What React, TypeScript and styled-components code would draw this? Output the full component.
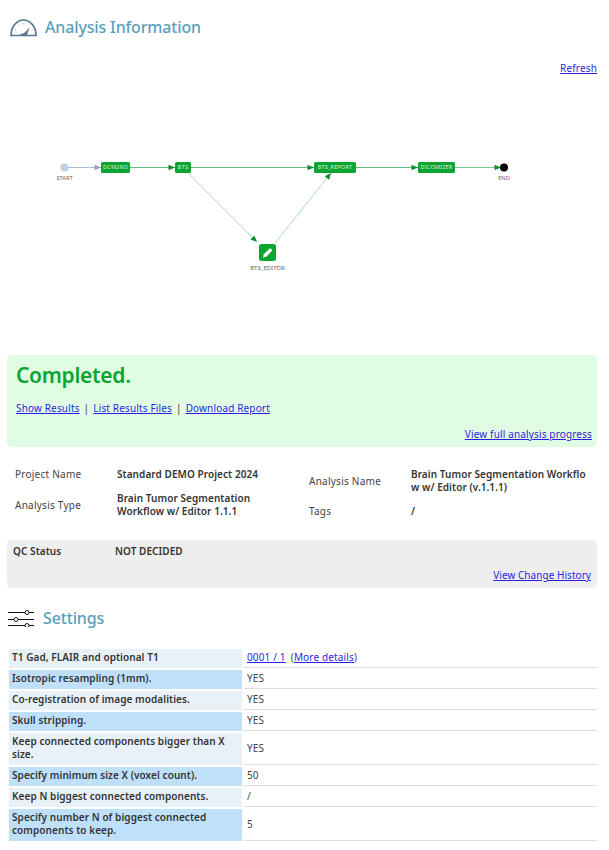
import React from 'react';
import styled, { createGlobalStyle } from 'styled-components';

const GlobalStyle = createGlobalStyle`
html, body {
  margin: 0;
  padding: 0;
  background: #fff;
  font-family: "Noto Sans", "Liberation Sans", sans-serif;
  font-size: 10px;
  letter-spacing: 0.15px;
  color: #333;
}
a {
  color: #2a1fe0;
  text-decoration: underline;
}
`;

const Page = styled.div`
  width: 609px;
  height: 850px;
  overflow: hidden;
  box-sizing: border-box;
  padding: 0 12px 0 7px;
`;

const SectionHeader = styled.div<{ $top: number; $left: number; $gap: number }>`
  display: flex;
  align-items: center;
  gap: ${p => p.$gap}px;
  padding: ${p => p.$top}px 0 0 ${p => p.$left}px;
  height: 20px;
`;

const SectionTitle = styled.h2`
  margin: 0;
  font-size: 16px;
  line-height: 20px;
  font-weight: 500;
  letter-spacing: -0.15px;
  color: #5b9fb8;
`;

const RefreshRow = styled.div`
  display: flex;
  justify-content: flex-end;
  margin-top: 24px;
  height: 14px;
  line-height: 14px;
`;

const Diagram = styled.svg`
  display: block;
  width: 590px;
  height: 281px;
  margin-top: -1px;
  letter-spacing: 0;
`;

const CompletedCard = styled.div`
  background: #e0fde4;
  border-radius: 5px;
  height: 92px;
  box-sizing: border-box;
  padding: 6px 5px 0 9px;
  display: flex;
  flex-direction: column;
`;

const CompletedTitle = styled.div`
  font-size: 21px;
  line-height: 28px;
  font-weight: 600;
  color: #0aa531;
  letter-spacing: -0.3px;
`;

const ResultLinks = styled.div`
  display: flex;
  gap: 4px;
  margin-top: 12px;
  line-height: 14px;
`;

const ProgressLink = styled.a`
  align-self: flex-end;
  margin-top: 12px;
  line-height: 14px;
`;

const InfoGrid = styled.div`
  display: grid;
  grid-template-columns: 294px 1fr;
  padding: 20px 0 0 8px;
  height: 55px;
`;

const InfoColumn = styled.div<{ $top: number; $gap: number }>`
  display: flex;
  flex-direction: column;
  gap: ${p => p.$gap}px;
  padding-top: ${p => p.$top}px;
`;

const InfoRow = styled.div<{ $height: number }>`
  display: grid;
  grid-template-columns: 102px 1fr;
  align-items: center;
  min-height: ${p => p.$height}px;
`;

const InfoLabel = styled.span`
  color: #444;
  letter-spacing: 0.25px;
`;

const InfoValue = styled.span<{ $breakWords?: boolean }>`
  font-weight: 600;
  line-height: 13px;
  letter-spacing: 0.07px;
  color: #333;
  width: ${p => (p.$breakWords ? 176 : 150)}px;
  word-break: ${p => (p.$breakWords ? 'break-all' : 'normal')};
`;

const QcCard = styled.div`
  background: #eeeeee;
  border-radius: 5px;
  margin-top: 18px;
  height: 48px;
  box-sizing: border-box;
  padding: 4px 6px 0 6px;
  display: flex;
  flex-direction: column;
`;

const QcRow = styled.div`
  display: grid;
  grid-template-columns: 102px 1fr;
  font-weight: 600;
  letter-spacing: 0.07px;
  line-height: 14px;
`;

const HistoryLink = styled.a`
  align-self: flex-end;
  margin-top: 10px;
  line-height: 14px;
  letter-spacing: 0.05px;
`;

const SettingsTable = styled.table`
  width: 592px;
  margin: 19px 0 0 0;
  border-collapse: separate;
  border-spacing: 2px;
  table-layout: fixed;
`;

const NameCell = styled.td<{ $striped: boolean }>`
  width: 233px;
  box-sizing: border-box;
  padding: 2px 3px 4px;
  font-weight: 600;
  letter-spacing: 0.07px;
  line-height: 13px;
  color: #333;
  background: ${p => (p.$striped ? '#bfe0fb' : '#e8f1f8')};
`;

const ValueCell = styled.td`
  padding: 2px 3px 3px;
  line-height: 13px;
  border-bottom: 1px solid #dfdfd8;
  color: #444;
`;

const DetailParen = styled.span`
  margin-left: 5px;
`;

const rows: { name: string; value: React.ReactNode }[] = [
  {
    name: 'T1 Gad, FLAIR and optional T1',
    value: (
      <>
        <a href="#">0001 / 1</a>
        <DetailParen>
          (<a href="#">More details</a>)
        </DetailParen>
      </>
    ),
  },
  { name: 'Isotropic resampling (1mm).', value: 'YES' },
  { name: 'Co-registration of image modalities.', value: 'YES' },
  { name: 'Skull stripping.', value: 'YES' },
  { name: 'Keep connected components bigger than X size.', value: 'YES' },
  { name: 'Specify minimum size X (voxel count).', value: '50' },
  { name: 'Keep N biggest connected components.', value: '/' },
  { name: 'Specify number N of biggest connected components to keep.', value: '5' },
];

const GaugeIcon = () => (
  <svg width="27" height="19" viewBox="0 0 27 19" fill="none" stroke="#54788a">
    <path d="M1 17.500 C1 9 6.500 2 13.500 2 S26 9 26 17.500 Z" strokeWidth="1.700" />
    <path d="M5 12l1.500.8M13.500 5v1.500M8 7l1 1M20 6.500l-1 1M23 12l-1.400.6" strokeWidth="0.7" stroke="#9db3bf" />
    <path d="M10 16.500c2-.5 4-1 5.500-2.600l4-4-2.200 5.400c-.3 1-.4 1.500-.4 2H10z" fill="#54788a" strokeWidth="0.4" />
  </svg>
);

const SlidersIcon = () => (
  <svg width="26" height="17" viewBox="0 0 26 17" fill="none" stroke="#111" strokeWidth="1">
    <path d="M0 2.500h17M21 2.500h5M0 9.500h6M10 9.500h16M0 15.500h17M21 15.500h5" />
    <circle cx="19" cy="2.500" r="2" />
    <circle cx="8" cy="9.500" r="2" />
    <circle cx="19" cy="15.500" r="2" />
  </svg>
);

const nodes = [
  { id: 'DCM2NII', x: 94, w: 29 },
  { id: 'BTS', x: 168, w: 16 },
  { id: 'BTS_REPORT', x: 307, w: 42 },
  { id: 'DICOMIZER', x: 411, w: 37 },
];

// y of the main line inside the diagram
const LINE = 93.5;

const Arrow = ({ x, y, angle, color }: { x: number; y: number; angle: number; color: string }) => (
  <path d="M-6.500 -2.800 L0 0 L-6.500 2.800 Z" fill={color} transform={`translate(${x} ${y}) rotate(${angle})`} />
);

const Workflow = () => (
  <Diagram viewBox="0 0 590 281">
    <g fill="none" strokeWidth="1">
      <path d={`M61 ${LINE}H94`} stroke="#a9bfd6" />
      <path d={`M123 ${LINE}H168M184 ${LINE}H307M349 ${LINE}H411`} stroke="#67b980" />
      <path d={`M448 ${LINE}H494`} stroke="#7fcb94" />
      <path d="M181 99L250 168M268 169L324 99" stroke="#a6dcb3" />
    </g>
    <Arrow x={94} y={LINE} angle={0} color="#8ba6c0" />
    <Arrow x={168} y={LINE} angle={0} color="#0a8f2e" />
    <Arrow x={307} y={LINE} angle={0} color="#0a8f2e" />
    <Arrow x={411} y={LINE} angle={0} color="#0a8f2e" />
    <Arrow x={494} y={LINE} angle={0} color="#0a8f2e" />
    <Arrow x={250} y={168} angle={45} color="#0a8f2e" />
    <Arrow x={324} y={99} angle={-51} color="#0a8f2e" />

    <circle cx="57.500" cy={LINE} r="4" fill="#bcd0e5" />
    <text x="57.500" y="106" fontSize="5.700" fill="#666" textAnchor="middle">START</text>
    <circle cx="497" cy={LINE} r="4" fill="#000" />
    <text x="497" y="106" fontSize="5.700" fill="#666" textAnchor="middle">END</text>

    {nodes.map(n => (
      <g key={n.id}>
        <rect x={n.x} y={LINE - 5.500} width={n.w} height="11" rx="1.500" fill="#0aa531" />
        <text x={n.x + n.w / 2} y={LINE + 1.500} fontSize="5.500" fill="#d7f3dd" textAnchor="middle" letterSpacing="0.2">{n.id}</text>
      </g>
    ))}

    <rect x="252" y="170" width="17" height="17" rx="2.500" fill="#0aa531" />
    <path d="M256 183.500l.8-3.200 5.600-5.600a1 1 0 0 1 1.400 0l1 1a1 1 0 0 1 0 1.400l-5.600 5.600z" fill="#fff" />
    <text x="260.500" y="196" fontSize="6" fill="#666" textAnchor="middle">BTS_EDITOR</text>
  </Diagram>
);

export default function App() {
  return (
    <>
      <GlobalStyle />
      <Page>
        <SectionHeader $top={17} $left={3} $gap={8}>
          <GaugeIcon />
          <SectionTitle>Analysis Information</SectionTitle>
        </SectionHeader>
        <RefreshRow>
          <a href="#">Refresh</a>
        </RefreshRow>
        <Workflow />
        <CompletedCard>
          <CompletedTitle>Completed.</CompletedTitle>
          <ResultLinks>
            <a href="#">Show Results</a>
            <span>|</span>
            <a href="#">List Results Files</a>
            <span>|</span>
            <a href="#">Download Report</a>
          </ResultLinks>
          <ProgressLink href="#">View full analysis progress</ProgressLink>
        </CompletedCard>
        <InfoGrid>
          <InfoColumn $top={0} $gap={11}>
            <InfoRow $height={14}>
              <InfoLabel>Project Name</InfoLabel>
              <InfoValue $breakWords>Standard DEMO Project 2024</InfoValue>
            </InfoRow>
            <InfoRow $height={26}>
              <InfoLabel>Analysis Type</InfoLabel>
              <InfoValue>Brain Tumor Segmentation Workflow w/ Editor 1.1.1</InfoValue>
            </InfoRow>
          </InfoColumn>
          <InfoColumn $top={1} $gap={10}>
            <InfoRow $height={26}>
              <InfoLabel>Analysis Name</InfoLabel>
              <InfoValue $breakWords>Brain Tumor Segmentation Workflow w/ Editor (v.1.1.1)</InfoValue>
            </InfoRow>
            <InfoRow $height={14}>
              <InfoLabel>Tags</InfoLabel>
              <InfoValue>/</InfoValue>
            </InfoRow>
          </InfoColumn>
        </InfoGrid>
        <QcCard>
          <QcRow>
            <span>QC Status</span>
            <span>NOT DECIDED</span>
          </QcRow>
          <HistoryLink href="#">View Change History</HistoryLink>
        </QcCard>
        <SectionHeader $top={20} $left={1} $gap={9}>
          <SlidersIcon />
          <SectionTitle>Settings</SectionTitle>
        </SectionHeader>
        <SettingsTable>
          <tbody>
            {rows.map((r, i) => (
              <tr key={r.name}>
                <NameCell $striped={i % 2 === 1}>{r.name}</NameCell>
                <ValueCell>{r.value}</ValueCell>
              </tr>
            ))}
          </tbody>
        </SettingsTable>
      </Page>
    </>
  );
}
